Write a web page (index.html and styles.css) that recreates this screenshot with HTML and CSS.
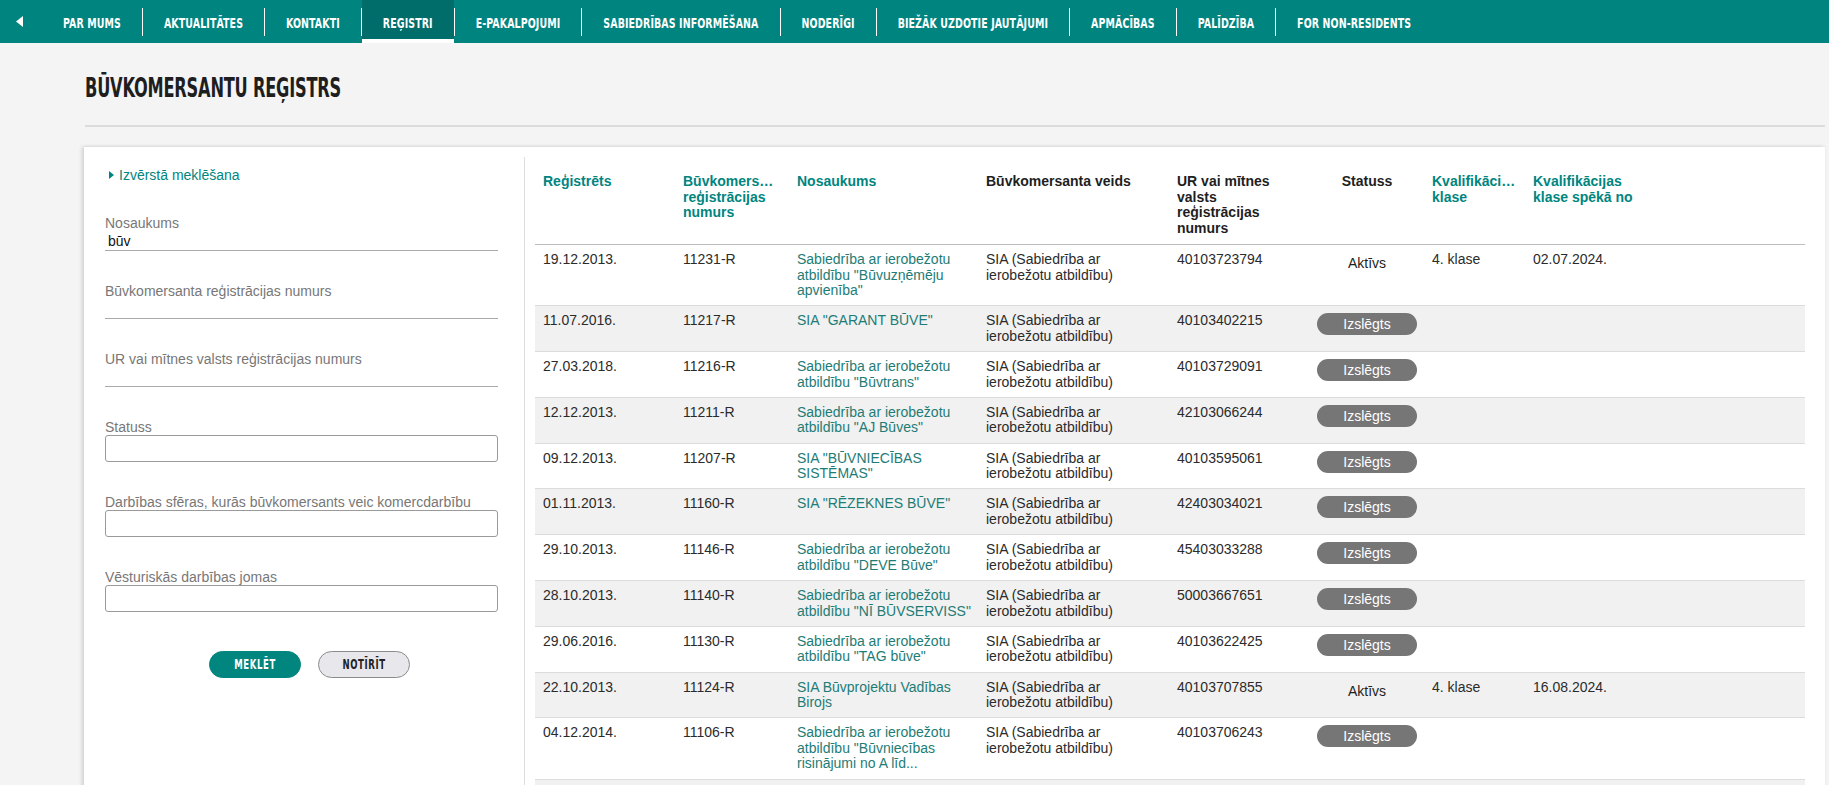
FILE: index.html
```html
<!DOCTYPE html>
<html lang="lv">
<head>
<meta charset="utf-8">
<title>Būvkomersantu reģistrs</title>
<link rel="stylesheet" href="styles.css">
</head>
<body>
<nav class="topnav">
  <a class="nav-back" href="#"><svg width="8" height="11" viewBox="0 0 8 11"><path d="M7 0 L0 5.5 L7 11 Z" fill="#fff"/></svg></a>
  <a class="nav-item" href="#"><span class="nav-label">PAR MUMS</span></a>
  <span class="nav-sep"></span>
  <a class="nav-item" href="#"><span class="nav-label">AKTUALITĀTES</span></a>
  <span class="nav-sep"></span>
  <a class="nav-item" href="#"><span class="nav-label">KONTAKTI</span></a>
  <span class="nav-sep"></span>
  <a class="nav-item active" href="#"><span class="nav-label">REĢISTRI</span></a>
  <span class="nav-sep"></span>
  <a class="nav-item" href="#"><span class="nav-label">E-PAKALPOJUMI</span></a>
  <span class="nav-sep"></span>
  <a class="nav-item" href="#"><span class="nav-label">SABIEDRĪBAS INFORMĒŠANA</span></a>
  <span class="nav-sep"></span>
  <a class="nav-item" href="#"><span class="nav-label">NODERĪGI</span></a>
  <span class="nav-sep"></span>
  <a class="nav-item" href="#"><span class="nav-label">BIEŽĀK UZDOTIE JAUTĀJUMI</span></a>
  <span class="nav-sep"></span>
  <a class="nav-item" href="#"><span class="nav-label">APMĀCĪBAS</span></a>
  <span class="nav-sep"></span>
  <a class="nav-item" href="#"><span class="nav-label">PALĪDZĪBA</span></a>
  <span class="nav-sep"></span>
  <a class="nav-item" href="#"><span class="nav-label">FOR NON-RESIDENTS</span></a>
</nav>

<main class="page">
  <h1 class="page-title"><span class="page-title-text">BŪVKOMERSANTU REĢISTRS</span></h1>
  <hr class="page-rule">

  <section class="card">
    <aside class="filters">
      <a class="toggle" href="#"><svg width="5" height="8" viewBox="0 0 5 8"><path d="M0 0 L5 4 L0 8 Z" fill="#00857f"/></svg><span>Izvērstā meklēšana</span></a>

      <div class="field field-line">
        <label class="field-label">Nosaukums</label>
        <input type="text" value="būv">
      </div>
      <div class="field field-line">
        <label class="field-label">Būvkomersanta reģistrācijas numurs</label>
        <input type="text">
      </div>
      <div class="field field-line">
        <label class="field-label">UR vai mītnes valsts reģistrācijas numurs</label>
        <input type="text">
      </div>
      <div class="field field-box">
        <label class="field-label">Statuss</label>
        <input type="text">
      </div>
      <div class="field field-box">
        <label class="field-label">Darbības sfēras, kurās būvkomersants veic komercdarbību</label>
        <input type="text">
      </div>
      <div class="field field-box">
        <label class="field-label">Vēsturiskās darbības jomas</label>
        <input type="text">
      </div>

      <div class="actions">
        <button class="btn btn-primary" type="button"><span class="btn-label">MEKLĒT</span></button>
        <button class="btn btn-secondary" type="button"><span class="btn-label">NOTĪRĪT</span></button>
      </div>
    </aside>

    <div class="results">
      <table class="grid">
        <colgroup>
          <col class="c-date"><col class="c-num"><col class="c-name"><col class="c-type"><col class="c-ur"><col class="c-status"><col class="c-class"><col class="c-from"><col class="c-rest">
        </colgroup>
        <thead>
          <tr>
            <th class="sort">Reģistrēts</th>
            <th class="sort"><span class="ell">Būvkomersanta</span>reģistrācijas numurs</th>
            <th class="sort">Nosaukums</th>
            <th>Būvkomersanta veids</th>
            <th>UR vai mītnes valsts reģistrācijas numurs</th>
            <th class="center">Statuss</th>
            <th class="sort"><span class="ell">Kvalifikācijas</span>klase</th>
            <th class="sort">Kvalifikācijas klase spēkā no</th>
            <th></th>
          </tr>
        </thead>
        <tbody>
          <tr>
            <td>19.12.2013.</td><td>11231-R</td>
            <td><a class="name" href="#">Sabiedrība ar ierobežotu atbildību "Būvuzņēmēju apvienība"</a></td>
            <td>SIA (Sabiedrība ar ierobežotu atbildību)</td><td>40103723794</td>
            <td class="center"><span class="status status-on">Aktīvs</span></td><td>4. klase</td><td>02.07.2024.</td><td></td>
          </tr>
          <tr>
            <td>11.07.2016.</td><td>11217-R</td>
            <td><a class="name" href="#">SIA "GARANT BŪVE"</a></td>
            <td>SIA (Sabiedrība ar ierobežotu atbildību)</td><td>40103402215</td>
            <td class="center"><span class="status status-off">Izslēgts</span></td><td></td><td></td><td></td>
          </tr>
          <tr>
            <td>27.03.2018.</td><td>11216-R</td>
            <td><a class="name" href="#">Sabiedrība ar ierobežotu atbildību "Būvtrans"</a></td>
            <td>SIA (Sabiedrība ar ierobežotu atbildību)</td><td>40103729091</td>
            <td class="center"><span class="status status-off">Izslēgts</span></td><td></td><td></td><td></td>
          </tr>
          <tr>
            <td>12.12.2013.</td><td>11211-R</td>
            <td><a class="name" href="#">Sabiedrība ar ierobežotu atbildību "AJ Būves"</a></td>
            <td>SIA (Sabiedrība ar ierobežotu atbildību)</td><td>42103066244</td>
            <td class="center"><span class="status status-off">Izslēgts</span></td><td></td><td></td><td></td>
          </tr>
          <tr>
            <td>09.12.2013.</td><td>11207-R</td>
            <td><a class="name" href="#">SIA "BŪVNIECĪBAS SISTĒMAS"</a></td>
            <td>SIA (Sabiedrība ar ierobežotu atbildību)</td><td>40103595061</td>
            <td class="center"><span class="status status-off">Izslēgts</span></td><td></td><td></td><td></td>
          </tr>
          <tr>
            <td>01.11.2013.</td><td>11160-R</td>
            <td><a class="name" href="#">SIA "RĒZEKNES BŪVE"</a></td>
            <td>SIA (Sabiedrība ar ierobežotu atbildību)</td><td>42403034021</td>
            <td class="center"><span class="status status-off">Izslēgts</span></td><td></td><td></td><td></td>
          </tr>
          <tr>
            <td>29.10.2013.</td><td>11146-R</td>
            <td><a class="name" href="#">Sabiedrība ar ierobežotu atbildību "DEVE Būve"</a></td>
            <td>SIA (Sabiedrība ar ierobežotu atbildību)</td><td>45403033288</td>
            <td class="center"><span class="status status-off">Izslēgts</span></td><td></td><td></td><td></td>
          </tr>
          <tr>
            <td>28.10.2013.</td><td>11140-R</td>
            <td><a class="name" href="#">Sabiedrība ar ierobežotu atbildību "NĪ BŪVSERVISS"</a></td>
            <td>SIA (Sabiedrība ar ierobežotu atbildību)</td><td>50003667651</td>
            <td class="center"><span class="status status-off">Izslēgts</span></td><td></td><td></td><td></td>
          </tr>
          <tr>
            <td>29.06.2016.</td><td>11130-R</td>
            <td><a class="name" href="#">Sabiedrība ar ierobežotu atbildību "TAG būve"</a></td>
            <td>SIA (Sabiedrība ar ierobežotu atbildību)</td><td>40103622425</td>
            <td class="center"><span class="status status-off">Izslēgts</span></td><td></td><td></td><td></td>
          </tr>
          <tr>
            <td>22.10.2013.</td><td>11124-R</td>
            <td><a class="name" href="#">SIA Būvprojektu Vadības Birojs</a></td>
            <td>SIA (Sabiedrība ar ierobežotu atbildību)</td><td>40103707855</td>
            <td class="center"><span class="status status-on">Aktīvs</span></td><td>4. klase</td><td>16.08.2024.</td><td></td>
          </tr>
          <tr>
            <td>04.12.2014.</td><td>11106-R</td>
            <td><a class="name" href="#">Sabiedrība ar ierobežotu atbildību "Būvniecības risinājumi no A līd...</a></td>
            <td>SIA (Sabiedrība ar ierobežotu atbildību)</td><td>40103706243</td>
            <td class="center"><span class="status status-off">Izslēgts</span></td><td></td><td></td><td></td>
          </tr>
          <tr class="filler">
            <td>&nbsp;</td><td></td><td></td><td></td><td></td><td></td><td></td><td></td><td></td>
          </tr>
        </tbody>
      </table>
    </div>
  </section>
</main>
</body>
</html>
```

FILE: styles.css
```css
html, body {
  margin: 0;
  padding: 0;
  background: #f4f4f4;
  overflow: hidden;
  font-family: "Liberation Sans", Arial, sans-serif;
}

/* ---------- top navigation ---------- */
.topnav {
  display: flex;
  height: 43px;
  background: #008480;
}
.nav-back {
  width: 42px;
  box-sizing: border-box;
  padding-left: 16px;
  display: flex;
  align-items: center;
}
.nav-item {
  display: flex;
  align-items: center;
  padding: 0 21px;
  color: #fff;
  text-decoration: none;
  white-space: nowrap;
  font-family: "DejaVu Sans Condensed", "DejaVu Sans", sans-serif;
  font-stretch: condensed;
  font-weight: bold;
  font-size: 10.5px;
  letter-spacing: 0.1px;
}
.nav-label {
  display: inline-block;
  transform: scaleY(1.4);
}
.nav-item.active {
  background: #006d6a;
  box-shadow: inset 0 -4px 0 #fff;
}
.nav-sep {
  width: 1px;
  height: 28px;
  align-self: center;
  background: #fff;
}

/* ---------- page ---------- */
.page {
  margin: 0 4px 0 85px;
}
.page-title {
  margin: 34px 0 0;
  height: 22px;
  font-family: "DejaVu Sans Condensed", "DejaVu Sans", sans-serif;
  font-stretch: condensed;
  font-weight: bold;
  font-size: 18px;
  line-height: 22px;
  letter-spacing: -0.2px;
  color: #1e1e1e;
}
.page-title-text {
  display: inline-block;
  transform: scaleY(1.5);
}
.page-rule {
  margin: 26px 0 0;
  height: 2px;
  border: 0;
  background: #dcdcdc;
}

.card {
  margin: 20px 0 0 -1px;
  display: flex;
  min-height: 700px;
  background: #fff;
  box-shadow: -2px 0 4px rgba(0, 0, 0, 0.14), 0 -1px 2px rgba(0, 0, 0, 0.04);
}

/* ---------- filters ---------- */
.filters {
  flex: none;
  width: 440px;
  box-sizing: border-box;
  padding: 20px 26px 0 21px;
  font-size: 14px;
  line-height: 16px;
}
.toggle {
  display: flex;
  align-items: center;
  gap: 5px;
  margin-left: 4px;
  color: #00857f;
  text-decoration: none;
}
.field {
  margin-top: 32px;
}
.field-label {
  display: block;
  color: #777;
  white-space: nowrap;
}
.field input {
  display: block;
  width: 100%;
  box-sizing: border-box;
  margin: 0;
  font-family: "Liberation Sans", Arial, sans-serif;
  font-size: 14px;
  color: #111;
  background: #fff;
  outline: none;
}
.field-line input {
  height: 20px;
  padding: 0 3px;
  border: 0;
  border-bottom: 1px solid #aaa;
}
.field-box input {
  height: 27px;
  padding: 0 6px;
  border: 1px solid #9a9a9a;
  border-radius: 3px;
}
.actions {
  display: flex;
  gap: 17px;
  margin-top: 39px;
  padding-left: 104px;
}
.btn {
  width: 92px;
  height: 27px;
  padding: 0;
  border-radius: 14px;
  font-family: "DejaVu Sans Condensed", "DejaVu Sans", sans-serif;
  font-stretch: condensed;
  font-weight: bold;
  font-size: 9.5px;
  letter-spacing: 0.6px;
  cursor: pointer;
}
.btn-label {
  display: inline-block;
  transform: scaleY(1.4);
}
.btn-primary {
  background: #00857f;
  border: 1px solid #00857f;
  color: #fff;
}
.btn-secondary {
  background: #e8e7ec;
  border: 1px solid #8a8a8a;
  color: #222;
}

/* ---------- results table ---------- */
.results {
  flex: 1;
  min-width: 0;
  margin-top: 10px;
  padding: 9px 20px 0 10px;
  border-left: 1px solid #dedede;
}
.grid {
  width: 100%;
  table-layout: fixed;
  border-collapse: collapse;
  font-size: 14px;
  line-height: 15.5px;
}
.c-date { width: 140px; }
.c-num { width: 114px; }
.c-name { width: 189px; }
.c-type { width: 191px; }
.c-ur { width: 141px; }
.c-status { width: 114px; }
.c-class { width: 101px; }
.c-from { width: 125px; }

.grid th {
  padding: 8px;
  text-align: left;
  vertical-align: top;
  font-weight: bold;
  color: #1e1e1e;
  border-bottom: 1px solid #bdbdbd;
}
.grid th:nth-child(5) {
  padding-right: 12px;
}
.grid th.sort {
  color: #00857f;
}
.ell {
  display: block;
  overflow: hidden;
  white-space: nowrap;
  text-overflow: ellipsis;
}
.grid td {
  padding: 7px 8px 6.8px;
  vertical-align: top;
  color: #2b2b2b;
  border-bottom: 1px solid #dcdcdc;
}
.grid td:nth-child(3) {
  padding-right: 2px;
}
.grid tbody tr:nth-child(even) td {
  background: #f1f1f1;
}
.grid .center {
  text-align: center;
  padding-left: 6px;
  padding-right: 6px;
}
.name {
  color: #1e7c76;
  text-decoration: none;
}
.status {
  display: inline-block;
  width: 100px;
  height: 22px;
  line-height: 22px;
  border-radius: 11px;
  vertical-align: top;
}
.status-on {
  color: #1e1e1e;
}
.status-off {
  background: #767676;
  color: #fff;
}
.filler td {
  height: 40px;
}
```
